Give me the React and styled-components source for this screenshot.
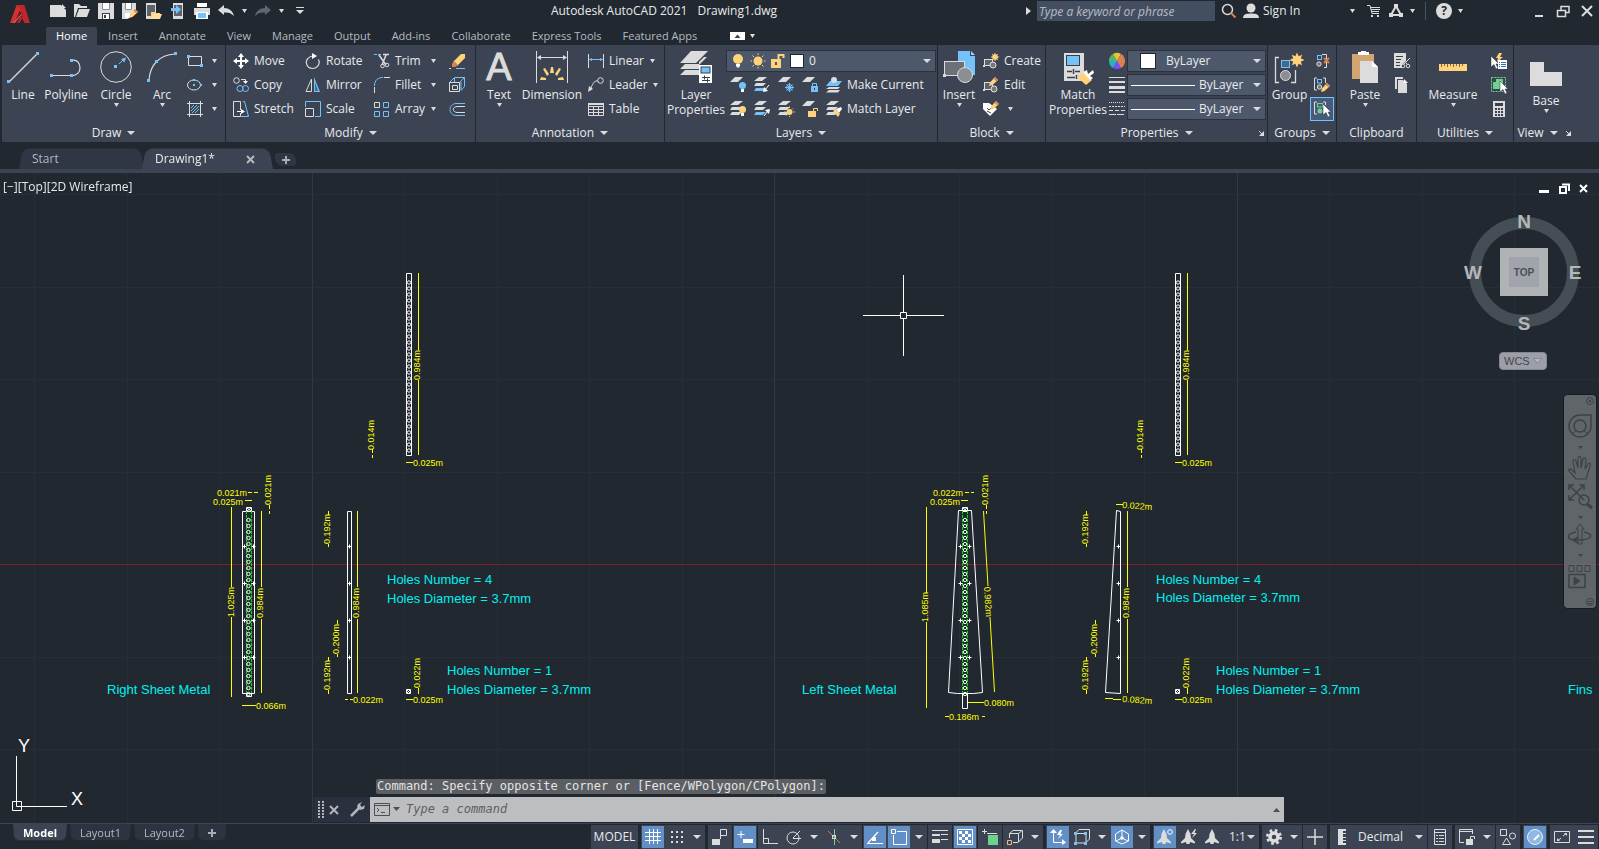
import React, { useState } from "react";
import styled, { createGlobalStyle, css } from "styled-components";

const W = "#dcdcdc";
const B = "#74c2fa";
const Y = "#ffd27c";
const O = "#d6804f";
const G = "#6fd28c";

const ln = (d, c = W, w = 1) => (
  <path d={d} fill="none" stroke={c} strokeWidth={w} />
);
const fl = (d, c = W) => <path d={d} fill={c} />;

const sheets = (x, y, w, last = W) => (
  <g transform={`translate(${x} ${y})`}>
    <path d={`M5 0H${w}L${w - 5} 4H0Z`} fill={W} />
    <path d={`M2 6H${w - 1}L${w - 4} 9H0Z`} fill={W} />
    <path d={`M2 11H${w - 1}L${w - 4} 14H0Z`} fill={last} />
  </g>
);

const bulb = (x, y, c) => (
  <g transform={`translate(${x} ${y})`}>
    <circle cx="3.5" cy="3.5" r="3.5" fill={c} />
    <rect x="2" y="7" width="3" height="3" fill="#fff" />
  </g>
);

const pencil = (x, y) => (
  <g transform={`translate(${x} ${y})`}>
    <path d="M0 9L1 5.500L6 0L9 3L3.500 8Z" fill={Y} />
    <path d="M6 0L9 3L7.500 4.500L4.500 1.500Z" fill={O} />
  </g>
);

const cursor = (x, y) => (
  <path
    d="M0 0V11L3 8.500L5 13L7 12L5 8H8Z"
    fill="#fff"
    stroke="#2b3340"
    strokeWidth="0.5"
    transform={`translate(${x} ${y})`}
  />
);

const star = (x, y, r) => (
  <path
    transform={`translate(${x} ${y}) scale(${r})`}
    d="M0-1L.22-.5L.7-.7L.5-.22L1 0L.5.22L.7.7L.22.5L0 1L-.22.5L-.7.7L-.5.22L-1 0L-.5-.22L-.7-.7L-.22-.5Z"
    fill={Y}
  />
);

const annoMan = fl(
  "M7 0L9.500 5L10 9L14 13V14.500L9 13L8.500 15H5.500L5 13L0 14.500V13L4 9L4.500 5Z"
);

const icons = {
  // title bar
  fresh: fl("M0 2H11L16 7V14H0ZM12 1L16 5H12Z"),
  open: fl("M0 1H5L7 3H13V5H4L1 14H0ZM5 6H16L13 14H2Z"),
  save: (
    <>
      {fl("M0 0H16V16H0Z")}
      {fl("M4 0H12V6H4Z", "#fff")}
      {ln("M4.500 0V6.500H11.500V0", "#8b9097")}
      {fl("M4 10H12V16H4Z", "#39404c")}
      {fl("M5 11H11V16H5Z", "#fff")}
      {fl("M6 12H8V15H6Z", "#39404c")}
    </>
  ),
  saveAs: (
    <>
      {fl("M0 0H14V8L6 16H0Z")}
      {fl("M3 0H10V6H3Z", "#fff")}
      {ln("M3.500 0V6.500H9.500V0", "#8b9097")}
      {fl("M3 10H8V15H3Z", "#fff")}
      {pencil(7, 6)}
    </>
  ),
  openMobile: (
    <>
      {fl("M0 0H10V16H0Z")}
      {fl("M1 2H9V13H1Z", "#5c636d")}
      {fl("M5 9H9L10 10H14V16H5Z", Y)}
      {fl("M7 11H16L14 16H5Z", "#ffe0a3")}
    </>
  ),
  saveMobile: (
    <>
      {fl("M3 0H13V16H3Z")}
      {fl("M4 2H12V13H4Z", "#5c636d")}
      {fl("M1 5H6V2L11 6.500L6 11V8H1Z", B)}
    </>
  ),
  print: (
    <>
      {fl("M3 0H13V4H3Z", "#fff")}
      {fl("M0 5H16V12H0Z")}
      {fl("M2 9H14V16H2Z", "#fff")}
      {fl("M4 10H12V15H4Z", B)}
    </>
  ),
  undo: fl("M0 7L6 2V5C11 5 15 8 16 13C13 10 10 9 6 9.500V12Z"),
  redo: fl("M16 7L10 2V5C5 5 1 8 0 13C3 10 6 9 10 9.500V12Z", "#5f6774"),
  custom: fl("M4 4H12V5H4ZM4 7H12L8 11Z"),
  lens: (
    <>
      <circle cx="6.500" cy="6.500" r="5" fill="none" stroke={W} strokeWidth="1.500" />
      {ln("M10 10L14.500 14.500", O, 2)}
    </>
  ),
  user: (
    <>
      <circle cx="8" cy="5" r="4.500" fill={W} />
      {fl("M0 15C0 11 4 10.500 8 10.500S16 11 16 15Z")}
    </>
  ),
  cart: (
    <>
      {ln("M1 2.500H4L6 10.500H13M5 4.500H14M5 6.500H14M6 8.500H13")}
      {fl("M5 12H7V14H5ZM11 12H13V14H11Z")}
    </>
  ),
  share: (
    <>
      {ln("M8 3L3 12M8 3L13 12M3 12H13", W, 2)}
      {fl("M6 1H10V5H6ZM1 10H5V14H1ZM11 10H15V14H11Z")}
    </>
  ),
  minimise: fl("M4 12H12V14H4Z"),
  restore: ln("M2.500 7.500H10.500V13.500H2.500ZM6 7V3.500H14V9.500H11", W, 1.5),
  close: ln("M3 3L13 13M13 3L3 13", W, 2),
  toggle: (
    <>
      {fl("M0 4H15V12H0Z", "#fff")}
      {fl("M4.500 10H10.500L7.500 6.500Z", "#3c4453")}
    </>
  ),

  // draw
  line: (
    <>
      {ln("M2 31L30 3", W, 1.2)}
      {fl("M0 29H3V32H0ZM29 1H32V4H29Z", B)}
    </>
  ),
  polyline: (
    <>
      {ln("M1 24.500H21M21 9.500C28 8 30 13 30 17S27 25 21 24.500", W, 1.2)}
      {fl("M0 23H3V26H0ZM20 23H23V26H20ZM20 8H23V11H20Z", B)}
    </>
  ),
  circle: (
    <>
      <circle cx="16" cy="16" r="15.300" fill="none" stroke={W} />
      {ln("M19 13L24 8", B)}
      {fl("M14 14H17V17H14ZM21 8L26 6.500L24.500 11.500Z", B)}
    </>
  ),
  arc: (
    <>
      {ln("M3 29C4 14 13 4 29 3", W, 1.2)}
      {fl("M1 28H4V31H1ZM9 9H12V12H9ZM28 1H31V4H28Z", B)}
    </>
  ),
  rect: (
    <>
      {ln("M1.500 3.500H14.500V12.500H1.500Z")}
      {fl("M0 2H3V5H0ZM13 11H16V14H13Z", B)}
    </>
  ),
  ellipse: (
    <>
      <ellipse cx="7" cy="8" rx="6.500" ry="5" fill="none" stroke={W} />
      {fl("M6 2H8V4H6ZM6 7H8V9H6ZM13 7H15V9H13Z", B)}
    </>
  ),
  hatch: (
    <>
      {ln("M2.500 0V16M13.500 0V16M0 2.500H16M0 13.500H16")}
      {ln("M4 7L7 4M4 10L10 4M5 12L12 5M8 12L12 8", B)}
    </>
  ),

  // modify
  move: fl(
    "M8 0L11 4H9V7H12V5L16 8L12 11V9H9V12H11L8 16L5 12H7V9H4V11L0 8L4 5V7H7V4H5Z",
    "#fff"
  ),
  copy: (
    <>
      <circle cx="3.500" cy="3.500" r="2.800" fill="none" stroke={W} />
      <circle cx="7" cy="11.500" r="3" fill="none" stroke={B} />
      <circle cx="12.500" cy="11.500" r="3" fill="none" stroke={B} />
      {ln("M8 2.500H12.500V5")}
      {fl("M10 4H15L12.500 7Z", "#fff")}
    </>
  ),
  stretch: (
    <>
      {ln("M0.500 0.500H7.500V9M7.500 12V15.500H0.500V0.500")}
      {ln("M10 0.500H11.500L15.500 15.500H8", B)}
      {ln("M4 10.500H10", "#fff")}
      {fl("M8 8L12 10.500L8 13Z", "#fff")}
    </>
  ),
  rotate: (
    <>
      {ln(
        "M13.500 6.500C16 12 11 15.500 7.500 15.500C2 15.500-.5 9 3 5.500C4 4.200 6 3 8 3",
        W,
        1.2
      )}
      {fl("M7 0L12 3L7 6Z", "#fff")}
    </>
  ),
  mirror: (
    <>
      {ln("M6.500 2V14.500H1Z")}
      {fl("M9 0V15H15Z", B)}
      {fl("M10 5V14H13Z", "#3a6a94")}
    </>
  ),
  scale: (
    <>
      {ln("M0.500 6V0.500H15.500V15.500H10", B)}
      {ln("M0.500 7.500H8.500V15.500H0.500Z")}
    </>
  ),
  trim: (
    <>
      {ln("M0 1.500H3M4 1.500H7", B)}
      {ln("M9 1.500H15M5 2L12 12M12 2L8 12", W, 1.5)}
      <circle cx="8.500" cy="13" r="1.800" fill="none" stroke={W} />
      <circle cx="13" cy="12" r="1.800" fill="none" stroke={W} />
    </>
  ),
  fillet: (
    <>
      {ln("M0.500 9C0.500 3 4 0.500 9 0.500", B)}
      {ln("M10 0.500H16M0.500 10V16")}
    </>
  ),
  array: (
    <>
      {ln("M0.500 1.500H5.500V6.500H0.500Z")}
      {ln(
        "M9.500 1.500H14.500V6.500H9.500ZM0.500 10.500H5.500V15.500H0.500ZM9.500 10.500H14.500V15.500H9.500Z",
        B
      )}
    </>
  ),
  erase: (
    <>
      {fl("M12 1H16V5L8 13L4 9Z", Y)}
      {fl("M5 8L9 12L6 14H3V11Z", O)}
      {ln("M0 15.500H2")}
      {ln("M7 15.500H16", B)}
    </>
  ),
  box: (
    <>
      {ln(
        "M0.500 5.500L5.500 0.500H15.500L10.500 5.500M15.500 0.500V9.500L12 13.500M5.500 1V5M12 13V5",
        B
      )}
      {ln("M0.500 5.500H10.500V14.500H0.500ZM3.500 8.500H8.500V12.500H3.500Z")}
    </>
  ),
  offset: (
    <>
      {ln("M16 2.500H7C-1 3-1 14 7 14.500H16", B)}
      {ln("M16 5.500H8C3 6 3 11 8 11.500H16")}
    </>
  ),

  // annotation
  dimension: (
    <>
      {ln("M0.500 0V32M31.500 0V32M2 6.500H30")}
      {fl("M1 6.500L5 4V9ZM31 6.500L27 4V9Z")}
      {fl(
        "M15 16H17L18 22H14ZM7 18L9 17L13 23L11 25ZM25 18L23 17L19 23L21 25ZM5 26L10 27V29H4ZM27 26L22 27V29H28Z",
        Y
      )}
    </>
  ),
  linear: (
    <>
      {ln("M0.500 1V15M15.500 1V15")}
      {ln("M1 6.500H15", B)}
      {fl("M1 6.500L4 5V8ZM15 6.500L12 5V8Z", B)}
    </>
  ),
  leader: (
    <>
      <circle cx="12.500" cy="3.500" r="2.800" fill="none" stroke={W} />
      {ln("M10 4H8C5 5 4 9 2 13")}
      {fl("M0 15L1 9L5 12Z")}
    </>
  ),
  table: (
    <>
      {ln(
        "M0.500 2.500H15.500V14.500H0.500ZM0 5.500H16M0 8.500H16M0 11.500H16M5.500 5V15M10.500 5V15"
      )}
      {fl("M0 2H16V4H0Z")}
    </>
  ),

  // layers
  layerProps: (
    <>
      {fl("M11 0H28L16 12H0ZM5 13H19V18H0ZM5 19H19V24H0Z")}
      {fl("M24 6H27L19 14V11Z")}
      {fl("M19 14H32V32H19Z", "#fff")}
      {fl("M20.500 15.500H30.500V22.500H20.500Z", "#39404c")}
      {fl("M21.500 16.500H29.500V21.500H21.500Z", B)}
      {ln("M22 26.500H30M22 29.500H30M24.500 24.500V28.500M27.500 27.500V31.500", "#39404c")}
    </>
  ),
  layBulbBlue: (
    <>
      {fl("M5 0H13L8 5H0Z")}
      {bulb(9, 5, B)}
    </>
  ),
  layIso: (
    <>
      {sheets(0, 0, 13, B)}
      {ln("M15 8L11 13", "#fff")}
      {fl("M9 15L10 10L14 14Z", "#fff")}
    </>
  ),
  layFreeze: (
    <>
      {fl("M5 0H13L8 5H0Z")}
      {ln("M11.500 6V15M7 10.500H16M8.500 7.500L14.500 13.500M14.500 7.500L8.500 13.500", B)}
      <circle cx="11.500" cy="10.500" r="3" fill="none" stroke={B} />
    </>
  ),
  layLock: (
    <>
      {fl("M5 0H13L8 5H0Z")}
      {fl("M9 9H16V15H9Z", B)}
      {ln("M10.500 9V6.500H14.500V9", B)}
      {fl("M12 11H13V13H12Z", "#39404c")}
    </>
  ),
  layCurrent: (
    <>
      {fl("M4 4H16L12 9H0Z", B)}
      {fl("M3 10H14L12 12H0ZM3 13H14L12 15.500H0Z")}
      <circle cx="8" cy="3" r="3" fill={W} />
    </>
  ),
  layBulb: (
    <>
      {sheets(0, 0, 13)}
      {bulb(9, 5, Y)}
    </>
  ),
  layUniso: (
    <>
      {sheets(0, 0, 13, B)}
      {ln("M10 15L14 10", "#fff")}
      {fl("M16 8L15 13L11 9Z", "#fff")}
    </>
  ),
  laySun: (
    <>
      {sheets(0, 0, 13)}
      <circle cx="11.500" cy="11" r="3" fill={Y} />
      {ln(
        "M11.500 5.500V7M11.500 15V16M6 11H7.500M15.500 11H17M8 7.500L9 8.500M15 7.500L14 8.500M8 14.500L9 13.500",
        Y
      )}
    </>
  ),
  layUnlock: (
    <>
      {fl("M5 0H13L8 5H0Z")}
      {fl("M6 10H14V16H6Z", Y)}
      {ln("M11.500 10V7.500H15.500V10", Y)}
    </>
  ),
  layMatch: (
    <>
      {sheets(0, 0, 13)}
      {fl("M7 10L10 8L14 13L12 16Z", Y)}
      {fl("M10 8L15 6L16 8L13 12Z", "#fff")}
    </>
  ),
  bulb: (
    <>
      <circle cx="8" cy="6" r="5" fill={Y} />
      {fl("M6 11H10V12.500L9 14.500H7L6 12.500Z", "#fff")}
    </>
  ),
  sun: (
    <>
      <circle cx="8" cy="8" r="4.500" fill={Y} />
      {ln(
        "M8 0.500V2M8 14V15.500M0.500 8H2M14 8H15.500M2.500 2.500L4 4M12 4L13.500 2.500M2.500 13.500L4 12M12 12L13.500 13.500",
        Y
      )}
    </>
  ),
  unlock: (
    <>
      {fl("M1 6H11V15H1Z", Y)}
      {ln("M8.500 6V2H13.500V5", Y, 2)}
      {fl("M5 9H7V12H5Z", "#4d596b")}
    </>
  ),

  // block
  insert: (
    <>
      {fl("M15 0H27V5H32V24H15Z", B)}
      {fl("M28 0L32 4H28Z", "#9ad5ff")}
      <rect x="1.500" y="10.500" width="20" height="14" fill="#6c7078" stroke={W} />
      <circle cx="22" cy="24" r="7.500" fill="#8b8f94" stroke={W} />
      {fl("M0 23H3V26H0Z")}
    </>
  ),
  create: (
    <>
      <rect x="1.500" y="6.500" width="8" height="6" fill="#5d626b" stroke={W} />
      <circle cx="10" cy="12" r="3" fill="#777" stroke={W} />
      {fl("M0 12H2V14H0Z")}
      {star(12, 4, 4.5)}
    </>
  ),
  edit: (
    <>
      <rect x="1.500" y="5.500" width="8" height="7" fill="#5d626b" stroke={W} />
      <circle cx="11" cy="12" r="3" fill="#777" stroke={W} />
      {fl("M0 12H2V14H0Z")}
      {pencil(6, 0)}
    </>
  ),
  attrib: (
    <>
      {fl("M0 2H6L14 8L7 15L0 8Z", "#fff")}
      {ln("M4 7L6 9L10 5M4 10L8 12", "#39404c")}
      {pencil(7, 0)}
    </>
  ),

  // properties
  matchProps: (
    <>
      {fl("M2 2H22V30H2Z")}
      {fl("M4 4H18V15H4Z", "#39404c")}
      {fl("M5 5H17V14H5Z", B)}
      {ln("M5 20.500H10M13 20.500H18M11.500 18V23M5 26.500H13M14.500 24V28", "#39404c", 1.5)}
      {fl("M15 26L22 21L30 29L24 34Z", Y)}
      {fl("M21 21L25 19L26 23L31 19L32 22L28 25L31 27L28 29Z", "#fff")}
    </>
  ),
  wheel: (
    <>
      {fl("M8 8L0 8A8 8 0 0 1 4 1Z", "#58b568")}
      {fl("M8 8L4 1A8 8 0 0 1 12 1Z", "#e8c33c")}
      {fl("M8 8L12 1A8 8 0 0 1 16 8L12 15Z", "#d98152")}
      {fl("M8 8L16 8A8 8 0 0 1 12 15Z", "#d98152")}
      {fl("M8 8L12 15A8 8 0 0 1 4 15Z", "#7c4dff")}
      {fl("M8 8L4 15A8 8 0 0 1 0 8Z", "#21b5c4")}
    </>
  ),
  weights: fl("M0 0H16V1H0ZM0 4H16V6H0ZM0 9H16V12H0ZM0 14H16V16H0Z"),
  types: (
    <>
      <path d="M0 1.500H16" stroke={W} strokeDasharray="1 1" />
      <path d="M0 5.500H16" stroke={W} strokeDasharray="2 1" />
      <path d="M0 9.500H16" stroke={W} strokeDasharray="4 2" />
      <path d="M0 13.500H16" stroke={W} strokeDasharray="7 1" />
    </>
  ),

  // groups
  group: (
    <>
      {ln("M5 6.500H1.500V31.500H5M17 31.500H21.500V19", W, 1.3)}
      <rect x="7.500" y="9.500" width="8" height="7" fill="#46688c" stroke={B} />
      <circle cx="11.500" cy="24.500" r="5" fill="#8b8f94" stroke={W} />
      {star(23, 9, 7.5)}
    </>
  ),
  ungroup: (
    <>
      {ln("M8 1.500H12.500V14.500H10")}
      <rect x="3.500" y="2.500" width="4" height="4" fill="none" stroke={B} />
      <circle cx="5" cy="11" r="2.200" fill="#777" stroke={W} />
      {ln("M10 5L15 10M15 5L10 10", O, 2)}
    </>
  ),
  groupEdit: (
    <>
      {ln("M3 1H0.500V13H3M9 1H11.500V6")}
      <rect x="3.500" y="2.500" width="4" height="3.500" fill="none" stroke={B} />
      <circle cx="5.500" cy="10" r="2.200" fill="#777" stroke={W} />
      {pencil(7, 6)}
    </>
  ),
  groupSel: (
    <>
      {ln("M3 1H0.500V13H3M9 1H11.500V4")}
      <rect x="3.500" y="2.500" width="5" height="3.500" fill="none" stroke={G} />
      <circle cx="6" cy="10" r="2.500" fill={G} />
      {cursor(9, 3)}
    </>
  ),

  // clipboard
  paste: (
    <>
      {fl("M3 3H25V28H3Z", "#d3a570")}
      {fl("M9 1H12V0H17V1H20V4H9Z", "#fff")}
      {fl("M11 10H23L29 16V32H11Z")}
      {fl("M23 10L29 16H23Z", "#fff")}
    </>
  ),
  cut: (
    <>
      {fl("M0 0H12V8L9 11H8V15H0Z")}
      {ln("M2 3.500H9M2 6.500H7M2 9.500H6M2 12.500H6", "#39404c")}
      {ln("M7 5L13 11M16 5L10 11")}
      <circle cx="9" cy="13" r="1.800" fill="none" stroke={W} />
      <circle cx="14" cy="13" r="1.800" fill="none" stroke={W} />
    </>
  ),
  copyClip: (
    <>
      {fl("M1 0H9V2H3V12H1Z")}
      {fl("M4 3H9L13 7V16H4Z")}
      {fl("M10 2L14 6H10Z", "#fff")}
    </>
  ),

  // utilities
  measure: (
    <>
      {fl("M2 13H30V20H2Z", Y)}
      {ln(
        "M4.500 13V16M7.500 13V15M10.500 13V16M13.500 13V15M16.500 13V16M19.500 13V15M22.500 13V16M25.500 13V15",
        "#7a6a45"
      )}
    </>
  ),
  quickSel: (
    <>
      {fl("M8 0H11L9 4H12L6 9L7 5H5Z", Y)}
      {cursor(0, 3)}
      {fl("M7 7H16V16H7Z", "#fff")}
      {ln("M8 9.500H9M10 9.500H15M8 11.500H9M10 11.500H15M8 13.500H9M10 13.500H15", "#2f75b5")}
    </>
  ),
  selAll: (
    <>
      <rect
        x="0.500"
        y="0.500"
        width="14"
        height="14"
        fill="none"
        stroke={G}
        strokeDasharray="2 1"
      />
      {fl("M5 2H12V9H9V12H2V5H5Z", G)}
      {cursor(9, 4)}
    </>
  ),
  calc: (
    <>
      {fl("M2 0H14V16H2Z")}
      {fl(
        "M4 2H12V5H4ZM4 7H6V9H4ZM7 7H9V9H7ZM10 7H12V9H10ZM4 10H6V12H4ZM7 10H9V12H7ZM10 10H12V12H10ZM4 13H6V15H4ZM7 13H9V15H7ZM10 13H12V15H10Z",
        "#39404c"
      )}
    </>
  ),
  base: fl("M0 5H14V15H32V29H0Z"),
  launcher: (
    <>
      {ln("M2 2L6 6")}
      {fl("M7 2V7H2Z")}
    </>
  ),

  // status bar
  grid: ln("M4.500 0V15M8.500 0V15M12.500 0V15M0 3.500H16M0 7.500H16M0 11.500H16", "#fff"),
  snap: fl(
    "M2 2H4V4H2ZM7 2H9V4H7ZM12 2H14V4H12ZM2 7H4V9H2ZM7 7H9V9H7ZM12 7H14V9H12ZM2 12H4V14H2ZM7 12H9V14H7ZM12 12H14V14H12Z"
  ),
  infer: (
    <>
      {fl("M0 10H8V16H0Z")}
      {ln("M8.500 10V0.500H14.500V6.500H9")}
    </>
  ),
  dyn: (
    <>
      {ln("M4 2V9M0.500 5.500H7.500", "#fff")}
      {fl("M6 10H16V14H6Z", "#fff")}
    </>
  ),
  ortho: ln("M1.500 0V14.500H16M1.500 9.500H6.500V14"),
  polar: (
    <>
      <circle cx="7" cy="9" r="6" fill="none" stroke={W} />
      {ln("M7 9.500H15M7 9L14 2")}
    </>
  ),
  iso: (
    <>
      {ln("M2 2L14 14", O)}
      {ln("M8.500 0V16", G)}
      <rect x="6.500" y="6.500" width="3" height="3" fill="none" stroke={W} />
    </>
  ),
  otrack: (
    <>
      {ln("M0 14.500H16M1 14L11 3", "#fff", 1.2)}
      {fl("M5 8H9V12H5Z", "#fff")}
    </>
  ),
  osnap: ln("M0.500 0.500H4.500V4.500H0.500ZM6 2.500H15.500V15.500H2.500V6", "#fff"),
  lwt: fl("M0 1H16V2H0ZM0 5H8V7H0ZM9 5H16V6H9ZM0 10H8V14H0ZM9 10H16V11H9Z"),
  transp: (
    <>
      {ln("M0.500 0.500H15.500V15.500H0.500Z", "#fff")}
      {fl(
        "M2 2H5V5H2ZM8 2H11V5H8ZM5 5H8V8H5ZM11 5H14V8H11ZM2 8H5V11H2ZM8 8H11V11H8ZM5 11H8V14H5ZM11 11H14V14H11Z",
        "#fff"
      )}
    </>
  ),
  cycling: (
    <>
      {ln("M2.500 0V5M0 2.500H5M5 4.500H15")}
      {fl("M6 6H16V16H6Z", G)}
    </>
  ),
  osnap3d: (
    <>
      {ln("M2.500 9V4.500L6 1.500H15.500V9L11 13.500H6M2.500 4.500H11.500V13M11.500 4.500L15 1.500")}
      {ln("M0.500 11.500H4.500V15.500H0.500Z", "#ffb47a")}
    </>
  ),
  ucs: (
    <>
      {ln("M3.500 2V13.500H14", "#fff")}
      {fl("M0 4L3.500 0L7 4ZM12 10L16 13.500L12 16ZM10 1L7 6H10L8 10L13 5H10.500L12 1Z", "#fff")}
    </>
  ),
  subobj: (
    <>
      {ln("M1.500 4L5 0.500H15.500V10L12 13.500M2 4.500H12V14H2Z")}
      {fl("M0 3H3V6H0ZM10 3H13V6H10ZM0 13H3V16H0ZM10 13H13V16H10Z", B)}
    </>
  ),
  gizmo: (
    <>
      {ln("M8 1L14.500 5V12L8 15L1.500 12V5ZM8 1V9M8 9L2 12M8 9L14 12", "#fff")}
      <circle cx="8" cy="9" r="1.800" fill="#fff" />
    </>
  ),
  annoVis: (
    <>
      {annoMan}
      <circle cx="13" cy="3" r="2.300" fill="none" stroke="#fff" />
    </>
  ),
  annoAuto: (
    <>
      {annoMan}
      {fl("M14 0L10 5H13L11 9L16 4H13.500L15 0Z")}
    </>
  ),
  anno: annoMan,
  gear: (
    <>
      <circle
        cx="8"
        cy="8"
        r="6.500"
        fill="none"
        stroke={W}
        strokeWidth="3"
        strokeDasharray="2.600 2.500"
      />
      <circle cx="8" cy="8" r="4" fill="none" stroke={W} strokeWidth="3.500" />
    </>
  ),
  plus: ln("M8 0V16M0 8H16", W, 1.5),
  ruler: fl("M4 0H12V2H9V4H12V5H9V8H12V9H9V11H12V12H9V14H12V16H4Z"),
  quickProps: ln(
    "M2.500 0.500H13.500V15.500H2.500ZM2 3.500H14M4 6.500H6M7 6.500H12M4 9.500H6M7 9.500H12M4 12.500H6M7 12.500H12"
  ),
  lockUi: (
    <>
      {ln("M5 13.500H0.500V0.500H13.500V5M0 2.500H14")}
      {fl("M7 10H14V16H7Z")}
      {ln("M11.500 10V7.500H15.500V10")}
    </>
  ),
  isolate: (
    <>
      {ln("M0.500 0.500H6.500V6.500H0.500ZM6.500 9L10.500 15.500H2.500Z")}
      <circle cx="12.500" cy="7" r="3" fill="none" stroke={W} />
    </>
  ),
  perf: (
    <>
      <circle cx="8" cy="8" r="7.500" fill="#8fb9e0" stroke="#e8f2fb" />
      {ln("M7 11L12 6", "#fff", 2)}
    </>
  ),
  clean: (
    <>
      {ln("M0.500 2.500H15.500V13.500H0.500Z")}
      {ln("M9 7L12 4.500M7 9L4 11.500")}
      {fl("M10 4H13V7ZM3 9V12H6Z")}
    </>
  ),
  burger: fl("M0 1H16V3H0ZM0 7H16V9H0ZM0 13H16V15H0Z"),
};

const Icon = ({ name, size = 16 }) => (
  <svg
    width={size}
    height={size}
    viewBox={`0 0 ${size} ${size}`}
    overflow="visible"
    aria-hidden="true"
  >
    {icons[name]}
  </svg>
);

const Down = ({ w = 5 }) => (
  <svg width={w} height="4" viewBox="0 0 8 5" preserveAspectRatio="none" aria-hidden="true">
    <path d="M0 0H8L4 5Z" fill={W} />
  </svg>
);

const Small = ({ icon, text, arrow, w, on }) => (
  <SmallButton $w={w} $on={on} aria-label={text || icon}>
    <Icon name={icon} />
    {text}
    {arrow && <Down />}
  </SmallButton>
);

const Big = ({ icon, text, arrow, w, low }) => (
  <BigButton $w={w} $low={low}>
    {icon === "text" ? <LetterA>A</LetterA> : <Icon name={icon} size={32} />}
    <span>{text}</span>
    {arrow && <Down />}
  </BigButton>
);

const Panel = ({ title, grow, menu, launcher, children }) => (
  <PanelBox $grow={grow}>
    <PanelBody>{children}</PanelBody>
    <PanelTitle $near={launcher === "near"}>
      {title}
      {menu && <Down w={8} />}
      {launcher && (
        <Launcher aria-label={title + " settings"} $edge={launcher === "edge"}>
          <Icon name="launcher" size={8} />
        </Launcher>
      )}
    </PanelTitle>
  </PanelBox>
);

const tabs = [
  "Home",
  "Insert",
  "Annotate",
  "View",
  "Manage",
  "Output",
  "Add-ins",
  "Collaborate",
  "Express Tools",
  "Featured Apps",
];

const quick = ["fresh", "open", "save", "saveAs", "openMobile", "saveMobile", "print"];

// [icon, on, gap before, arrow after]
const statusItems = [
  ["grid", 1, 3, 0],
  ["snap", 0, 0, 1],
  ["infer", 0, 3, 0],
  ["dyn", 1, 1, 0],
  ["ortho", 0, 1, 0],
  ["polar", 0, 0, 1],
  ["iso", 0, 0, 1],
  ["otrack", 1, 1, 0],
  ["osnap", 1, 0, 1],
  ["lwt", 0, 1, 0],
  ["transp", 1, 1, 0],
  ["cycling", 0, 1, 0],
  ["osnap3d", 0, 1, 1],
  ["ucs", 1, 3, 0],
  ["subobj", 0, 0, 1],
  ["gizmo", 1, 0, 1],
  ["annoVis", 1, 3, 0],
  ["annoAuto", 0, 0, 0],
  ["anno", 0, 0, 0],
  ["scaleList"],
  ["gear", 0, 3, 1],
  ["plus", 0, 1, 0],
  ["units"],
  ["quickProps", 0, 1, 0],
  ["lockUi", 0, 3, 1],
  ["isolate", 0, 1, 0],
  ["perf", 1, 3, 0],
  ["clean", 0, 3, 0],
  ["burger", 0, 0, 0],
];

const range = (from, n, step) => Array.from({ length: n }, (_, i) => from + i * step);

const HoleRow = ({ x, y, n }) =>
  range(y, n, 6).map((cy) => (
    <circle key={cy} cx={x} cy={cy} r="1.700" fill="none" stroke="#fff" />
  ));

const Marks = ({ x }) =>
  [546.5, 583.5, 620.5, 657.5].map((y) => (
    <path key={y} d={`M${x - 2} ${y}H${x + 2}M${x} ${y - 2}V${y + 2}`} stroke="#fff" />
  ));

const Up = ({ x, y, children }) => (
  <text transform={`translate(${x} ${y}) rotate(-90)`} textAnchor="middle">
    {children}
  </text>
);

const yl = (d) => <path d={d} stroke="#ffff00" fill="none" />;
const wh = (d) => <path d={d} stroke="#ffffff" fill="none" />;

const TopStrip = ({ dx }) => (
  <g transform={`translate(${dx} 0)`}>
    {wh("M406.500 273.500H411.500V455.500H406.500Z")}
    <HoleRow x={409} y={282.5} n={29} />
    {yl("M418.500 273V350M418.500 380V455M406 462.500H413M372.500 449V453M372.500 455V458")}
    <Up x={420} y={365}>0.984m</Up>
    <Up x={374} y={435}>0.014m</Up>
    <text x="413" y="466">0.025m</text>
    {wh("M406.500 689.500H410.500V693.500H406.500ZM407 690L410 693M410 690L407 693")}
    {yl("M418.500 688V694M406 699.500H413")}
    <Up x={420} y={673}>0.022m</Up>
    <text x="413" y="703">0.025m</text>
  </g>
);

const SideDims = ({ dx }) => (
  <g transform={`translate(${dx} 0)`}>
    {yl(
      "M328.500 511V515M328.500 544V547M337.500 620V624M337.500 654V657M328.500 657V661M328.500 690V694"
    )}
    <Up x={330} y={529}>0.192m</Up>
    <Up x={339} y={639}>0.200m</Up>
    <Up x={330} y={675}>0.192m</Up>
  </g>
);

const Drawing = () => (
  <DrawingSvg>
    <g transform="translate(0 -173)">
      {range(34.5, 40, 92.5).map((x, i) => (
        <path
          key={x}
          d={`M${Math.floor(x) + 0.5} 173V3000`}
          stroke={i % 5 === 3 ? "#313945" : "#272e39"}
        />
      ))}
      {range(194.5, 20, 92.5).map((y) => (
        <path key={y} d={`M0 ${Math.floor(y) + 0.5}H4000`} stroke="#272e39" />
      ))}
      <path d="M0 564.500H4000" stroke="#7f1f27" />

      <Dims>
        <TopStrip dx={0} />
        <TopStrip dx={769} />

        {wh(
          "M242.500 511.500H254.500V693.500H242.500ZM246.500 507.500H251.500V511.500H246.500ZM246.500 693.500V696.500H251.500V693.500M247 508L251 511M251 508L247 511"
        )}
        <path d="M246.500 511V693M251.500 511V693" stroke="#00e800" strokeDasharray="3 1" />
        <HoleRow x={248.5} y={520} n={30} />
        <Marks x={244.5} />
        <Marks x={253.5} />
        {yl(
          "M231.500 507V587M231.500 617V697M261.500 511V587M261.500 619V693M248 492.500H252M254 492.500H258M245 500.500H252M269.500 505V509M269.500 511V514M242 705.500H256"
        )}
        <Up x={234} y={602}>1.025m</Up>
        <Up x={263} y={603}>0.984m</Up>
        <text x="217" y="496">0.021m</text>
        <text x="213" y="505">0.025m</text>
        <Up x={271} y={490}>0.021m</Up>
        <text x="256" y="709">0.066m</text>

        <SideDims dx={0} />
        {wh("M347.500 511.500H351.500V693.500H347.500Z")}
        <Marks x={349.5} />
        {yl("M357.500 511V587M357.500 619V693M345 699.500H348M350 699.500H353")}
        <Up x={359} y={603}>0.984m</Up>
        <text x="353" y="703">0.022m</text>

        {wh(
          "M958.500 510.500H971.500L982.500 692.500L973.500 693.500H957.500L948.500 692.500ZM962.500 507.500H967.500V511.500H962.500ZM962.500 693.500V708.500H967.500V693.500M963 508L967 511M967 508L963 511"
        )}
        <path d="M962.500 511V693M967.500 511V693" stroke="#00e800" strokeDasharray="3 1" />
        <HoleRow x={965} y={520} n={30} />
        <Marks x={960.5} />
        <Marks x={969.5} />
        {yl(
          "M926.500 507V593M926.500 622V708M983.500 511L988 586M990 617L994.500 692M965 492.500H969M971 492.500H974M961 500.500H968M986.500 505V509M986.500 511V514M968 702.500H984M945 716.500H949M982 716.500H985"
        )}
        <Up x={928} y={607}>1.085m</Up>
        <text transform="translate(985 602) rotate(86)" textAnchor="middle">
          0.982m
        </text>
        <text x="933" y="496">0.022m</text>
        <text x="930" y="505">0.025m</text>
        <Up x={988} y={490}>0.021m</Up>
        <text x="984" y="706">0.080m</text>
        <text x="949" y="720">0.186m</text>

        <SideDims dx={758} />
        {wh("M1116.500 510.500L1120.500 511.500V693.500L1105.500 692.500Z")}
        <Marks x={1118.5} />
        {yl("M1127.500 511V587M1127.500 619V693M1116 504.500H1123M1105 698.500H1113M1113 699.500H1121")}
        <Up x={1129} y={603}>0.984m</Up>
        <text transform="translate(1122 508) rotate(4)">0.022m</text>
        <text transform="translate(1122 702) rotate(4)">0.082m</text>
      </Dims>

      <Notes>
        <text x="387" y="584">Holes Number = 4</text>
        <text x="387" y="603">Holes Diameter = 3.7mm</text>
        <text x="447" y="675">Holes Number = 1</text>
        <text x="447" y="694">Holes Diameter = 3.7mm</text>
        <text x="107" y="694">Right Sheet Metal</text>
        <text x="802" y="694">Left Sheet Metal</text>
        <text x="1156" y="584">Holes Number = 4</text>
        <text x="1156" y="602">Holes Diameter = 3.7mm</text>
        <text x="1216" y="675">Holes Number = 1</text>
        <text x="1216" y="694">Holes Diameter = 3.7mm</text>
        <text x="1568" y="694">Fins</text>
      </Notes>

      {wh(
        "M863 315.500H900M907 315.500H944M903.500 275V312M903.500 319V356M900.500 312.500H906.500V318.500H900.500Z"
      )}

      {wh("M16.500 756V806.500H67M12.500 801.500H21.500V810.500H12.500Z")}
      <AxisName x="18" y="752">Y</AxisName>
      <AxisName x="71" y="805">X</AxisName>
    </g>
  </DrawingSvg>
);

const ViewCube = () => (
  <Cube viewBox="0 0 120 120" width="120" height="120">
    <circle cx="60" cy="60" r="49" fill="none" stroke="#454d55" strokeWidth="12" />
    <rect x="36" y="36" width="48" height="48" fill="#b0b3b4" />
    <rect x="45" y="45" width="30" height="30" fill="#a1a4ac" />
    <text className="top" x="60" y="64">TOP</text>
    <text x="60" y="16">N</text>
    <text x="60" y="118">S</text>
    <text x="9" y="67">W</text>
    <text x="111" y="67">E</text>
  </Cube>
);

const NavIcons = () => (
  <svg width="32" height="213" viewBox="0 0 32 213" fill="none" stroke="#3c4249" aria-hidden="true">
    <circle cx="26" cy="6" r="3.500" />
    <path d="M24.500 4.500L27.500 7.500M27.500 4.500L24.500 7.500" />
    <path d="M5 31A11 11 0 0 1 16 20H27V31A11 11 0 0 1 5 31Z" strokeWidth="1.500" />
    <circle cx="16" cy="31" r="6" strokeWidth="1.500" />
    <path d="M12 36L8 39M20 36L24 39" />
    <path d="M14 51H19L16.500 54Z" fill="#3c4249" stroke="none" />
    <path
      d="M12 84L5 76C4 74 6 73 8 75L11 78L9 66C9 64 11 64 12 66L14 73V63C14 61 17 61 17 63V73L19 64C20 62 22 63 22 65L21 74L24 69C26 67 27 69 26 71L22 84Z"
      strokeWidth="1.200"
    />
    <path d="M5 90L20 105M20 90L5 105M5 95V90H10M15 90H20V95M5 100V105H10" strokeWidth="1.500" />
    <circle cx="20" cy="105" r="5" strokeWidth="1.500" />
    <path d="M23 109L28 113" strokeWidth="3" />
    <path d="M14 121H19L16.500 124Z" fill="#3c4249" stroke="none" />
    <path d="M14 149V134H12L16 129L20 134H18V149Z" />
    <path
      d="M12 137C2 139 2 145 12 145M20 137C30 139 30 145 12 145M14 142L9 145L14 148"
      strokeWidth="1.500"
    />
    <path d="M14 159H19L16.500 162Z" fill="#3c4249" stroke="none" />
    <path d="M5 170.500H10V176.500H5ZM13 170.500H18V176.500H13ZM21 170.500H26V176.500H21Z" />
    <path d="M5 179.500H21V192.500H5Z" strokeWidth="1.500" />
    <path d="M10 182V190L16 186Z" fill="#3c4249" />
    <circle cx="26" cy="207" r="3.500" />
    <path d="M24 206.500H28M24 208.500H28" />
  </svg>
);

const App = () => {
  const [active, setActive] = useState("Home");
  const [command, setCommand] = useState("");

  return (
    <Window>
      <Global />
      <Header>
        <AppMenu aria-label="Application menu">
          <svg width="21" height="19" viewBox="0 0 22 20" aria-hidden="true">
            <path d="M7 0H15L21 19H15L13 14L10 19H0Z" fill="#bf272b" />
            <path d="M7 0L0 19H5L12 6Z" fill="#cf322f" />
            <path d="M10 6L5 19H8L11 12L13 14L12 8Z" fill="#7c1518" />
            <path d="M4 19L12 10" stroke="#b8a08c" />
          </svg>
        </AppMenu>
        <div>
          <TitleBar>
            <QuickBar>
              {quick.map((q) => (
                <IconButton key={q} aria-label={q}>
                  <Icon name={q} />
                </IconButton>
              ))}
              <IconButton aria-label="undo">
                <Icon name="undo" />
              </IconButton>
              <Down />
              <IconButton aria-label="redo">
                <Icon name="redo" />
              </IconButton>
              <Down />
              <IconButton aria-label="customize">
                <Icon name="custom" />
              </IconButton>
            </QuickBar>
            <Title>
              <span>Autodesk AutoCAD 2021</span>
              <span>Drawing1.dwg</span>
            </Title>
            <Account>
              <svg width="5" height="8" viewBox="0 0 5 8" aria-hidden="true">
                <path d="M0 0L5 4L0 8Z" fill={W} />
              </svg>
              <Search aria-label="Search" placeholder="Type a keyword or phrase" />
              <IconButton aria-label="search">
                <Icon name="lens" />
              </IconButton>
              <SignIn>
                <Icon name="user" />
                Sign In
                <Down />
              </SignIn>
              <IconButton aria-label="store">
                <Icon name="cart" />
              </IconButton>
              <IconButton aria-label="connect">
                <Icon name="share" />
              </IconButton>
              <Down />
              <Rule />
              <Help>?</Help>
              <Down />
            </Account>
            <WindowButtons>
              {["minimise", "restore", "close"].map((b) => (
                <IconButton key={b} aria-label={b}>
                  <Icon name={b} />
                </IconButton>
              ))}
            </WindowButtons>
          </TitleBar>
          <Tabs>
            {tabs.map((t) => (
              <Tab key={t} $on={t === active} onClick={() => setActive(t)}>
                {t}
              </Tab>
            ))}
            <Toggle aria-label="Minimize ribbon">
              <Icon name="toggle" />
              <Down />
            </Toggle>
          </Tabs>
        </div>
      </Header>

      <Ribbon>
        <Panel title="Draw" grow={223} menu>
          <Big icon="line" text="Line" w={40} />
          <Big icon="polyline" text="Polyline" w={46} />
          <Big icon="circle" text="Circle" w={54} arrow />
          <Big icon="arc" text="Arc" w={38} arrow />
          <Stack $left={6}>
            <Small icon="rect" w={30} arrow />
            <Small icon="ellipse" w={30} arrow />
            <Small icon="hatch" w={30} arrow />
          </Stack>
        </Panel>
        <Panel title="Modify" grow={249} menu>
          <Stack $left={6}>
            <Small icon="move" text="Move" w={72} />
            <Small icon="copy" text="Copy" w={72} />
            <Small icon="stretch" text="Stretch" w={72} />
          </Stack>
          <Stack>
            <Small icon="rotate" text="Rotate" w={69} />
            <Small icon="mirror" text="Mirror" w={69} />
            <Small icon="scale" text="Scale" w={69} />
          </Stack>
          <Stack>
            <Small icon="trim" text="Trim" w={62} arrow />
            <Small icon="fillet" text="Fillet" w={62} arrow />
            <Small icon="array" text="Array" w={62} arrow />
          </Stack>
          <Stack $left={13}>
            <Small icon="erase" />
            <Small icon="box" />
            <Small icon="offset" />
          </Stack>
        </Panel>
        <Panel title="Annotation" grow={188} menu>
          <Big icon="text" text="Text" w={44} arrow />
          <Big icon="dimension" text="Dimension" w={62} />
          <Stack $left={5}>
            <Small icon="linear" text="Linear" w={67} arrow />
            <Small icon="leader" text="Leader" w={67} arrow />
            <Small icon="table" text="Table" w={67} />
          </Stack>
        </Panel>
        <Panel title="Layers" grow={272} menu>
          <Big icon="layerProps" text="Layer Properties" w={60} />
          <Stack $fill>
            <Drop>
              <Icon name="bulb" />
              <Icon name="sun" />
              <Icon name="unlock" />
              <Swatch />
              <select aria-label="Layer" defaultValue="0">
                <option>0</option>
              </select>
              <Down w={8} />
            </Drop>
            <LayerRow>
              {["layBulbBlue", "layIso", "layFreeze", "layLock"].map((i) => (
                <Small key={i} icon={i} />
              ))}
              <Small icon="layCurrent" text="Make Current" />
            </LayerRow>
            <LayerRow>
              {["layBulb", "layUniso", "laySun", "layUnlock"].map((i) => (
                <Small key={i} icon={i} />
              ))}
              <Small icon="layMatch" text="Match Layer" />
            </LayerRow>
          </Stack>
        </Panel>
        <Panel title="Block" grow={107} menu>
          <Big icon="insert" text="Insert" w={40} arrow />
          <Stack $left={4}>
            <Small icon="create" text="Create" />
            <Small icon="edit" text="Edit" />
            <Small icon="attrib" w={30} arrow />
          </Stack>
        </Panel>
        <Panel title="Properties" grow={221} menu launcher="edge">
          <Big icon="matchProps" text="Match Properties" w={62} />
          <Stack>
            <Small icon="wheel" w={18} />
            <Small icon="weights" w={18} />
            <Small icon="types" w={18} />
          </Stack>
          <Stack $fill>
            <Drop $pad={12}>
              <Swatch $big />
              <select aria-label="Object color" defaultValue="ByLayer">
                <option>ByLayer</option>
              </select>
              <Down w={8} />
            </Drop>
            {["Lineweight", "Linetype"].map((n) => (
              <Drop key={n}>
                <Dash />
                <select aria-label={n} defaultValue="ByLayer">
                  <option>ByLayer</option>
                </select>
                <Down w={8} />
              </Drop>
            ))}
          </Stack>
        </Panel>
        <Panel title="Groups" grow={68} menu>
          <Big icon="group" text="Group" w={41} />
          <Stack>
            <Small icon="ungroup" w={24} />
            <Small icon="groupEdit" w={24} />
            <Small icon="groupSel" w={24} on />
          </Stack>
        </Panel>
        <Panel title="Clipboard" grow={79}>
          <Big icon="paste" text="Paste" w={54} arrow />
          <Stack $left={2}>
            <Small icon="cut" />
            <Small icon="copyClip" />
          </Stack>
        </Panel>
        <Panel title="Utilities" grow={96} menu>
          <Big icon="measure" text="Measure" w={70} arrow />
          <Stack $left={3}>
            <Small icon="quickSel" />
            <Small icon="selAll" />
            <Small icon="calc" />
          </Stack>
        </Panel>
        <Panel title="View" grow={85} menu launcher="near">
          <Big icon="base" text="Base" w={62} arrow low />
        </Panel>
      </Ribbon>

      <FileTabs>
        <FileTab>Start</FileTab>
        <FileTab $on>
          Drawing1*
          <IconButton aria-label="Close drawing">
            <svg width="9" height="9" viewBox="0 0 9 9" aria-hidden="true">
              {ln("M1 1L8 8M8 1L1 8", "#b4b9c0", 2)}
            </svg>
          </IconButton>
        </FileTab>
        <AddTab aria-label="New tab">
          <svg width="8" height="8" viewBox="0 0 8 8" aria-hidden="true">
            {fl("M3 0H5V3H8V5H5V8H3V5H0V3H3Z", "#a9aeb6")}
          </svg>
        </AddTab>
      </FileTabs>

      <Canvas>
        <Drawing />
        <ViewLabel>[−][Top][2D Wireframe]</ViewLabel>
        <DocButtons aria-label="Drawing window">
          <svg width="50" height="11" viewBox="0 0 50 11" aria-hidden="true">
            {fl("M0 7H10V10H0Z", "#fff")}
            {ln("M21 4H27V10H21ZM23 1.500H30V8", "#fff", 2)}
            {ln("M41 2L48 9M48 2L41 9", "#fff", 2)}
          </svg>
        </DocButtons>
        <ViewCube />
        <Wcs>
          WCS
          <svg width="9" height="6" viewBox="0 0 9 6" aria-hidden="true">
            <path d="M0.500 0.500H8.500L4.500 5.500Z" fill="#b5b7bf" stroke="#85878f" />
          </svg>
        </Wcs>
        <NavBar>
          <NavIcons />
        </NavBar>
        <CommandArea>
          <History>Command: Specify opposite corner or [Fence/WPolygon/CPolygon]:</History>
          <CommandRow>
            <CommandTools>
              <svg width="6" height="18" viewBox="0 0 6 18" aria-hidden="true">
                <path
                  d="M1 0V18M5 0V18"
                  stroke="#b4b6ba"
                  strokeWidth="2"
                  strokeDasharray="2 1"
                />
              </svg>
              <svg width="10" height="10" viewBox="0 0 10 10" aria-hidden="true">
                {ln("M1 1L9 9M9 1L1 9", "#b4b6ba", 2)}
              </svg>
              <svg width="15" height="15" viewBox="0 0 15 15" aria-hidden="true">
                {ln("M1 14L9 6", "#b4b6ba", 2.5)}
                {fl("M7 5L8 2L12 0L10 3L12 5L15 3L14 7L10 8Z", "#b4b6ba")}
              </svg>
            </CommandTools>
            <CommandBox>
              <svg width="26" height="13" viewBox="0 0 26 13" aria-hidden="true">
                {ln("M0.500 0.500H15.500V12.500H0.500ZM0 2.500H16M3 5L5 7L3 9M7 9.500H11", "#4b4f55")}
                {fl("M19 4H26L22.500 8Z", "#4b4f55")}
              </svg>
              <input
                aria-label="Command"
                placeholder="Type a command"
                value={command}
                onChange={(e) => setCommand(e.target.value)}
              />
              <svg width="7" height="4" viewBox="0 0 7 4" aria-hidden="true">
                {fl("M0 4H7L3.500 0Z", "#4b4f55")}
              </svg>
            </CommandBox>
          </CommandRow>
        </CommandArea>
      </Canvas>

      <Footer>
        <Layouts>
          <Layout $on>Model</Layout>
          <Layout>Layout1</Layout>
          <Layout>Layout2</Layout>
          <Layout aria-label="New layout">
            <svg width="8" height="8" viewBox="0 0 8 8" aria-hidden="true">
              {fl("M3 0H5V3H8V5H5V8H3V5H0V3H3Z", "#a9aeb6")}
            </svg>
          </Layout>
        </Layouts>
        <Status>
          <ModelButton>MODEL</ModelButton>
          {statusItems.map(([name, on, gap, arrow]) => {
            if (name === "scaleList")
              return (
                <StatusDrop key={name} $w={34} $inner={2}>
                  <select aria-label="Annotation scale" defaultValue="1:1">
                    <option>1:1</option>
                  </select>
                  <Down w={8} />
                </StatusDrop>
              );
            if (name === "units")
              return (
                <StatusDrop key={name} $w={97} $gap={3} $inner={8}>
                  <Icon name="ruler" />
                  <select aria-label="Units" defaultValue="Decimal">
                    <option>Decimal</option>
                  </select>
                  <Down w={8} />
                </StatusDrop>
              );
            return (
              <React.Fragment key={name}>
                <Cell $on={on} $gap={gap} aria-label={name}>
                  <Icon name={name} />
                </Cell>
                {arrow === 1 && (
                  <ArrowCell aria-label={name + " menu"}>
                    <Down w={8} />
                  </ArrowCell>
                )}
              </React.Fragment>
            );
          })}
        </Status>
      </Footer>
    </Window>
  );
};

export default App;

const Global = createGlobalStyle`
  * { box-sizing: border-box; }
  body {
    margin: 0;
    background: #212830;
    color: #e8eaec;
    font: 12px/16px "Open Sans", "Noto Sans", sans-serif;
  }
  button, input, select {
    margin: 0;
    padding: 0;
    border: 0;
    outline: none;
    background: none;
    color: inherit;
    font: inherit;
  }
  select { appearance: none; min-width: 0; flex: 1; }
  svg { display: block; flex: none; }
`;

const Window = styled.div`
  min-height: 100vh;
  display: flex;
  flex-direction: column;
`;

const Header = styled.header`
  display: grid;
  grid-template-columns: 46px 1fr;
`;

const AppMenu = styled.button`
  display: flex;
  padding: 5px 0 0 10px;
`;

const IconButton = styled.button`
  display: flex;
`;

const TitleBar = styled.div`
  display: flex;
  align-items: center;
  height: 27px;
  padding-bottom: 5px;
`;

const QuickBar = styled.div`
  display: flex;
  align-items: center;
  gap: 8px;
  padding-left: 4px;
`;

const Title = styled.div`
  flex: 1;
  display: flex;
  justify-content: center;
  gap: 10px;
  padding-right: 6px;
`;

const Account = styled.div`
  display: flex;
  align-items: center;
  gap: 6px;
`;

const Search = styled.input`
  width: 178px;
  height: 20px;
  padding: 0 2px;
  background: #444e61;
  font-style: italic;
  font-family: "Noto Sans", sans-serif;
  &::placeholder {
    color: #b2b7bf;
  }
`;

const SignIn = styled.button`
  display: flex;
  align-items: center;
  gap: 4px;
  width: 112px;
  margin-right: 5px;
  svg:last-child {
    margin-left: auto;
  }
`;

const Rule = styled.span`
  width: 1px;
  height: 18px;
  margin: 0 4px;
  background: #4a5160;
`;

const Help = styled.button`
  width: 16px;
  height: 16px;
  border-radius: 8px;
  background: ${W};
  color: #212830;
  font-weight: 700;
`;

const WindowButtons = styled.div`
  display: flex;
  gap: 8px;
  padding: 0 4px 0 68px;
`;

const Tabs = styled.nav`
  display: flex;
  gap: 1px;
  height: 18px;
  font-size: 11px;
`;

const Tab = styled.button`
  padding: 0 10px;
  border-radius: 2px 2px 0 0;
  color: ${(p) => (p.$on ? "#fff" : "#b5bac2")};
  background: ${(p) => (p.$on ? "#3c4453" : "none")};
`;

const Toggle = styled.button`
  display: flex;
  align-items: center;
  gap: 4px;
  margin-left: 22px;
`;

const Ribbon = styled.section`
  display: flex;
  gap: 1px;
  padding-left: 2px;
`;

const PanelBox = styled.div`
  flex: ${(p) => p.$grow} 1 0;
  min-width: 0;
  height: 97px;
  display: flex;
  flex-direction: column;
  background: #3c4453;
`;

const PanelBody = styled.div`
  flex: 1;
  display: flex;
  padding: 4px 1px 0;
`;

const PanelTitle = styled.div`
  display: flex;
  align-items: center;
  justify-content: center;
  gap: 6px;
  height: 19px;
  padding-right: ${(p) => (p.$near ? 24 : 0)}px;
`;

const Launcher = styled.button`
  display: flex;
  ${(p) =>
    p.$edge &&
    css`
      margin: 0 -72px 0 58px;
    `}
`;

const BigButton = styled.button`
  width: ${(p) => p.$w}px;
  flex: none;
  display: flex;
  flex-direction: column;
  align-items: center;
  padding-top: ${(p) => (p.$low ? 8 : 2)}px;
  line-height: 15px;
  span {
    margin-top: 4px;
  }
  svg:last-child {
    margin-top: 1px;
  }
`;

const LetterA = styled.b`
  height: 32px;
  color: ${W};
  font: 400 38px/32px "Liberation Sans", Arial, sans-serif;
  -webkit-text-stroke: 1px ${W};
`;

const Stack = styled.div`
  display: flex;
  flex-direction: column;
  padding-left: ${(p) => p.$left || 0}px;
  ${(p) => p.$fill && "flex: 1; min-width: 0;"}
`;

const SmallButton = styled.button`
  display: flex;
  align-items: center;
  gap: 5px;
  height: 24px;
  width: ${(p) => (p.$w ? p.$w + "px" : "auto")};
  white-space: nowrap;
  svg:last-child:not(:first-child) {
    margin-left: auto;
  }
  ${(p) =>
    p.$w === 24 &&
    css`
      justify-content: center;
    `}
  ${(p) =>
    p.$on &&
    css`
      background: #49597a;
      box-shadow: inset 0 0 0 1px ${B};
    `}
`;

const LayerRow = styled.div`
  display: flex;
  gap: 8px;
  padding-left: 4px;
`;

const Drop = styled.div`
  display: flex;
  align-items: center;
  gap: 4px;
  height: 22px;
  margin: 1px 0;
  padding: 0 4px 0 ${(p) => p.$pad || 3}px;
  border: 1px solid #2b323e;
  background: #4d596b;
`;

const Swatch = styled.span`
  width: ${(p) => (p.$big ? 16 : 14)}px;
  height: ${(p) => (p.$big ? 16 : 14)}px;
  margin-right: ${(p) => (p.$big ? 6 : 1)}px;
  border: 1px solid #20262f;
  background: #fff;
`;

const Dash = styled.span`
  width: 64px;
  height: 1px;
  background: #fff;
`;

const FileTabs = styled.nav`
  display: flex;
  align-items: flex-end;
  height: 31px;
  padding-left: 20px;
  border-bottom: 4px solid #3c4453;
`;

const FileTab = styled.div`
  position: relative;
  z-index: 0;
  display: flex;
  align-items: center;
  justify-content: space-between;
  width: ${(p) => (p.$on ? 129 : 123)}px;
  height: 22px;
  padding: 2px 17px 0 12px;
  color: ${(p) => (p.$on ? "#e8eaec" : "#b5bac2")};
  &::before {
    content: "";
    position: absolute;
    z-index: -1;
    inset: 0 -1px;
    border-radius: 8px 8px 0 0;
    background: ${(p) => (p.$on ? "#3c4453" : "#303744")};
    transform: perspective(30px) rotateX(5deg);
    transform-origin: bottom;
  }
`;

const AddTab = styled.button`
  display: flex;
  align-items: center;
  justify-content: center;
  width: 21px;
  height: 13px;
  margin: 0 0 3px 3px;
  border-radius: 3px 8px 3px 8px;
  background: #303744;
`;

const Canvas = styled.main`
  position: relative;
  flex: 1;
  min-height: 400px;
  overflow: hidden;
`;

const DrawingSvg = styled.svg`
  position: absolute;
  inset: 0;
  width: 100%;
  height: 100%;
  font-family: "Liberation Sans", Arial, sans-serif;
`;

const Dims = styled.g`
  font-size: 9px;
  fill: #ffff00;
`;

const Notes = styled.g`
  font-size: 13px;
  fill: #00f0f0;
`;

const AxisName = styled.text`
  font-size: 18px;
  fill: #ffffff;
`;

const ViewLabel = styled.div`
  position: absolute;
  left: 3px;
  top: 6px;
`;

const DocButtons = styled.button`
  position: absolute;
  right: 10px;
  top: 10px;
`;

const Cube = styled.svg`
  position: absolute;
  right: 15px;
  top: 39px;
  overflow: visible;
  font: 700 19px "Liberation Sans", Arial, sans-serif;
  fill: #b4b7ba;
  text-anchor: middle;
  .top {
    font-size: 10px;
    fill: #4b4f55;
  }
`;

const Wcs = styled.button`
  position: absolute;
  right: 52px;
  top: 179px;
  width: 48px;
  height: 18px;
  display: flex;
  align-items: center;
  justify-content: space-between;
  padding: 0 4px;
  border: 1px solid #868891;
  border-radius: 4px;
  background: #9c9ea8;
  color: #44474e;
  font: 11px "Liberation Sans", Arial, sans-serif;
`;

const NavBar = styled.div`
  position: absolute;
  right: 3px;
  top: 222px;
  border-radius: 4px;
  background: rgba(113, 116, 120, 0.8);
  box-shadow: 0 0 0 1px #171c23;
`;

const CommandArea = styled.div`
  position: absolute;
  left: 314px;
  right: 315px;
  bottom: 1px;
  font: 12px/15px "DejaVu Sans Mono", monospace;
`;

const History = styled.div`
  width: fit-content;
  margin: 0 0 3px 62px;
  padding: 0 1px;
  border-radius: 2px;
  background: #5b5e62;
  color: #e4e4e4;
  white-space: nowrap;
`;

const CommandRow = styled.div`
  display: flex;
  height: 25px;
`;

const CommandTools = styled.div`
  display: flex;
  align-items: center;
  gap: 5px;
  width: 56px;
  padding-left: 4px;
  background: #2a303d;
  svg:last-child {
    margin-left: 6px;
  }
`;

const CommandBox = styled.div`
  flex: 1;
  display: flex;
  align-items: center;
  gap: 6px;
  padding: 0 4px;
  background: #bdbec0;
  input {
    flex: 1;
    color: #33363b;
    font-style: italic;
  }
  input::placeholder {
    color: #5c5f64;
  }
`;

const Footer = styled.footer`
  display: flex;
  justify-content: space-between;
  height: 26px;
  border-top: 1px solid #3c4453;
`;

const Layouts = styled.nav`
  display: flex;
  gap: 3px;
  height: 17px;
  padding-left: 13px;
  font-size: 11px;
`;

const Layout = styled.button`
  position: relative;
  z-index: 0;
  display: flex;
  align-items: center;
  height: 17px;
  padding: 0 10px;
  font-weight: ${(p) => (p.$on ? 700 : 400)};
  color: ${(p) => (p.$on ? "#fff" : "#b5bac2")};
  &::before {
    content: "";
    position: absolute;
    z-index: -1;
    inset: 0;
    border-radius: 0 0 5px 5px;
    background: ${(p) => (p.$on ? "#3c4453" : "#2d3440")};
    transform: perspective(30px) rotateX(-5deg);
    transform-origin: top;
  }
`;

const Status = styled.div`
  display: flex;
  padding: 1px 1px 0 0;
`;

const cell = css`
  flex: none;
  display: flex;
  align-items: center;
  justify-content: center;
  height: 24px;
  background: #3c4453;
`;

const ModelButton = styled.button`
  ${cell}
  width: 47px;
`;

const Cell = styled.button`
  ${cell}
  width: 24px;
  margin-left: ${(p) => p.$gap || 0}px;
  ${(p) =>
    p.$on &&
    css`
      background: #6290c6;
      border: 1px solid #3c4453;
    `}
`;

const ArrowCell = styled.button`
  ${cell}
  width: 16px;
`;

const StatusDrop = styled.div`
  ${cell}
  width: ${(p) => p.$w}px;
  margin-left: ${(p) => p.$gap || 0}px;
  padding: 0 4px;
  gap: ${(p) => p.$inner}px;
`;
